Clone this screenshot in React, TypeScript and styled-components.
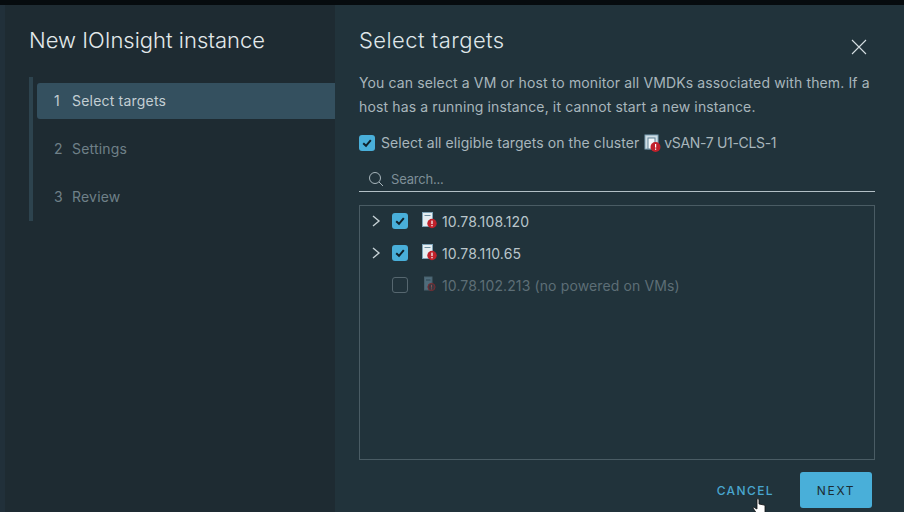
import React from 'react'
import styled, { createGlobalStyle } from 'styled-components'

const GlobalStyle = createGlobalStyle`
  html, body {
    margin: 0;
    padding: 0;
    background: #21333b;
  }
  * {
    box-sizing: border-box;
  }
`
const Page = styled.div`
  position: relative;
  display: flex;
  flex-direction: column;
  width: 904px;
  height: 512px;
  overflow: hidden;
  font-family: Inter, 'Noto Sans', sans-serif;
  background: #21333b;
`
const TopBar = styled.div`
  flex: none;
  height: 5px;
  background: #060b0e;
`
const Modal = styled.div`
  display: flex;
  flex: 1;
  min-height: 0;
`
const Sidebar = styled.aside`
  flex: none;
  width: 335px;
  padding: 20px 0 0 24px;
  background: #1e2b32;
  border-left: 5px solid #21303a;
`
const WizardTitle = styled.h1`
  margin: 0;
  height: 30px;
  font-size: 22px;
  line-height: 30px;
  font-weight: 300;
  color: #e3e9eb;
`
const Steps = styled.ol`
  list-style: none;
  display: flex;
  flex-direction: column;
  gap: 12px;
  margin: 22px 0 0;
  padding: 6px 0 0 4px;
  height: 144px;
  border-left: 4px solid #2d434e;
`
const Step = styled.li<{ $active?: boolean }>`
  display: flex;
  align-items: center;
  height: 36px;
  padding: 0 0 2px 17px;
  border-radius: 3px 0 0 3px;
  font-size: 14px;
  letter-spacing: 0.2px;
  background: ${p => (p.$active ? '#34505f' : 'transparent')};
  color: ${p => (p.$active ? '#c3ced3' : '#6f8088')};
`
const StepNumber = styled.span`
  width: 18px;
`
const Main = styled.main`
  flex: 1;
  display: flex;
  flex-direction: column;
  padding: 20px 29px 0 24px;
`
const Header = styled.div`
  flex: none;
  display: flex;
  justify-content: space-between;
  height: 30px;
`
const Title = styled.h2`
  margin: 0;
  font-size: 22px;
  line-height: 30px;
  font-weight: 300;
  letter-spacing: 0.43px;
  color: #dfe6e9;
`
const CloseButton = styled.button`
  display: flex;
  width: 16px;
  height: 16px;
  margin: 14px 8px 0 0;
  padding: 0;
  border: 0;
  background: none;
  color: #d5dee2;
`
const Description = styled.p`
  flex: none;
  margin: 16px 0 0;
  font-size: 14px;
  line-height: 24px;
  letter-spacing: 0.13px;
  color: #a8b6bc;
`
const SelectAll = styled.label`
  flex: none;
  display: flex;
  align-items: center;
  height: 24px;
  margin-top: 12px;
  font-size: 14px;
  letter-spacing: 0.07px;
  color: #a8b6bc;
`
const SelectAllText = styled.span`
  margin-bottom: 2px;
`
const Box = styled.span<{ $checked?: boolean }>`
  display: flex;
  align-items: center;
  justify-content: center;
  flex: none;
  width: 16px;
  height: 16px;
  border-radius: 3px;
  background: ${p => (p.$checked ? '#49afd9' : 'transparent')};
  border: ${p => (p.$checked ? '0' : '1px solid #56676f')};
`
const SelectAllBox = styled(Box)`
  margin-right: 6px;
`
const ClusterIcon = styled.span`
  display: flex;
  margin: 0 3px 0 5px;
`
const ClusterName = styled(SelectAllText)`
  letter-spacing: -0.33px;
`
const SearchField = styled.div`
  flex: none;
  display: flex;
  align-items: center;
  gap: 7px;
  height: 28px;
  margin-top: 9px;
  padding: 3px 0 0 9px;
  border-bottom: 1px solid #b3c0c6;
  font-size: 13px;
  letter-spacing: -0.2px;
  color: #7e8f97;
`
const Tree = styled.div`
  flex: none;
  height: 255px;
  margin-top: 13px;
  border: 1px solid #4a5c64;
`
const Row = styled.div<{ $disabled?: boolean }>`
  display: flex;
  align-items: center;
  height: 32px;
  font-size: 14px;
  letter-spacing: 0.12px;
  color: ${p => (p.$disabled ? '#5d6e76' : '#bac6cb')};

  &:first-child {
    margin-top: -1px;
  }
`
const Caret = styled.span`
  display: flex;
  justify-content: center;
  width: 32px;
  color: #c5d0d4;
`
const RowIcon = styled.span`
  display: flex;
  margin: 0 4px 0 14px;
`
const Footer = styled.div`
  flex: none;
  display: flex;
  align-items: center;
  justify-content: flex-end;
  gap: 26px;
  height: 36px;
  margin-top: 12px;
  padding-right: 3px;
`
const CancelButton = styled.button`
  padding: 0;
  border: 0;
  background: none;
  font-family: inherit;
  font-size: 12px;
  font-weight: 500;
  letter-spacing: 1.4px;
  color: #49a6cf;
`
const NextButton = styled.button`
  width: 72px;
  height: 36px;
  padding: 0;
  border: 0;
  border-radius: 3px;
  background: #49afd9;
  font-family: inherit;
  font-size: 12px;
  font-weight: 400;
  letter-spacing: 1.7px;
  color: #1c2c33;
`
const Pointer = styled.svg`
  position: absolute;
  left: 752px;
  top: 498px;
`

const HostIcon = () => (
  <svg width="16" height="18" viewBox="0 0 16 18">
    <rect x="0.5" y="0.5" width="10" height="14" fill="#e6eef2" stroke="#7fa4b8" />
    <rect x="2.5" y="3" width="6" height="1" fill="#6d8ea0" />
    <circle cx="10" cy="11.5" r="4.7" fill="#c1212b" />
    <rect x="9.4" y="8.6" width="1.2" height="3.5" fill="#fff" />
    <rect x="9.4" y="13" width="1.2" height="1.3" fill="#fff" />
  </svg>
)

const DimHostIcon = () => (
  <svg width="16" height="18" viewBox="0 0 16 18">
    <rect x="2.5" y="1" width="7.5" height="13" fill="#4f6c7b" stroke="#48606d" />
    <rect x="4" y="3.5" width="4.5" height="1" fill="#2f4552" />
    <circle cx="9.5" cy="11" r="3.6" fill="#3a3a42" stroke="#7c2a30" />
    <rect x="9" y="8.8" width="1" height="2.8" fill="#8b5055" />
    <rect x="9" y="12.4" width="1" height="1" fill="#8b5055" />
  </svg>
)

const ClusterGlyph = () => (
  <svg width="17" height="18" viewBox="0 0 17 18">
    <rect x="1" y="1" width="13" height="14" fill="#cfdde4" stroke="#7fa4b8" />
    <rect x="4" y="4" width="7" height="11" fill="#f2f6f8" stroke="#5f8195" />
    <circle cx="11.5" cy="13" r="5" fill="#c1212b" />
    <rect x="11" y="10" width="1.2" height="3.6" fill="#fff" />
    <rect x="11" y="14.5" width="1.2" height="1.3" fill="#fff" />
  </svg>
)

const Check = () => (
  <svg width="12" height="12" viewBox="0 0 12 12" fill="none">
    <path d="M2.2 6.2 L5 8.8 L9.8 3.2" stroke="#10212a" strokeWidth="2" />
  </svg>
)

const Chevron = () => (
  <svg width="10" height="14" viewBox="0 0 10 14" fill="none">
    <path d="M2 2 L8 7 L2 12" stroke="currentColor" strokeWidth="1.4" />
  </svg>
)

const hosts = [
  { name: '10.78.108.120', checked: true },
  { name: '10.78.110.65', checked: true },
  { name: '10.78.102.213 (no powered on VMs)', disabled: true },
]

export default function App() {
  return (
    <Page>
      <GlobalStyle />
      <TopBar />
      <Modal>
        <Sidebar>
          <WizardTitle>New IOInsight instance</WizardTitle>
          <Steps>
            <Step $active><StepNumber>1</StepNumber>Select targets</Step>
            <Step><StepNumber>2</StepNumber>Settings</Step>
            <Step><StepNumber>3</StepNumber>Review</Step>
          </Steps>
        </Sidebar>
        <Main>
          <Header>
            <Title>Select targets</Title>
            <CloseButton aria-label="Close">
              <svg width="16" height="16" viewBox="0 0 16 16" fill="none">
                <path d="M1 1 L15 15 M15 1 L1 15" stroke="currentColor" strokeWidth="1.1" />
              </svg>
            </CloseButton>
          </Header>
          <Description>
            You can select a VM or host to monitor all VMDKs associated with them. If a host has a running instance, it cannot start a new instance.
          </Description>
          <SelectAll>
            <SelectAllBox $checked><Check /></SelectAllBox>
            <SelectAllText>Select all eligible targets on the cluster</SelectAllText>
            <ClusterIcon><ClusterGlyph /></ClusterIcon>
            <ClusterName>vSAN-7 U1-CLS-1</ClusterName>
          </SelectAll>
          <SearchField>
            <svg width="16" height="16" viewBox="0 0 16 16" fill="none">
              <circle cx="7" cy="7" r="5.5" stroke="#a8b6bc" />
              <path d="M11 11 L15 15" stroke="#a8b6bc" />
            </svg>
            Search...
          </SearchField>
          <Tree>
            {hosts.map(host => (
              <Row key={host.name} $disabled={host.disabled}>
                <Caret>{!host.disabled && <Chevron />}</Caret>
                <Box $checked={host.checked}>{host.checked && <Check />}</Box>
                <RowIcon>{host.disabled ? <DimHostIcon /> : <HostIcon />}</RowIcon>
                {host.name}
              </Row>
            ))}
          </Tree>
          <Footer>
            <CancelButton>CANCEL</CancelButton>
            <NextButton>NEXT</NextButton>
          </Footer>
        </Main>
      </Modal>
      <Pointer width="14" height="16" viewBox="0 0 14 16">
        <path d="M5 1 C5.8 0.4 7 1 7 2 L7 6 L12 7 C13 7.4 13 8 13 9 L13 16 L5 16 L1 10 C1 9 2 9 3 10 L5 11 Z" fill="#fff" stroke="#111" strokeWidth="0.8" />
      </Pointer>
    </Page>
  )
}
